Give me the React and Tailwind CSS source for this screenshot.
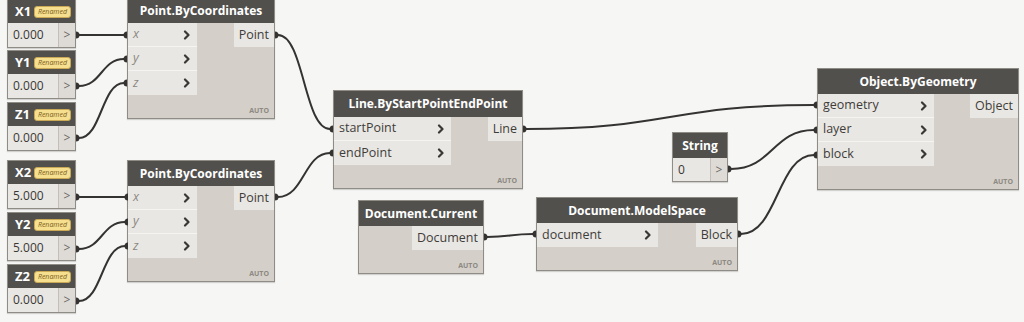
import React from "react";

const FONT = { fontFamily: '"Open Sans", "Noto Sans", sans-serif' };

function Chevron() {
  return (
    <svg width="8" height="10" viewBox="0 0 8 10" className="shrink-0">
      <path d="M2 1.5 L5.5 5 L2 8.5" fill="none" stroke="#3a3835" strokeWidth="2.2" strokeLinecap="round" strokeLinejoin="round" />
    </svg>
  );
}

function Badge() {
  return (
    <span className="ml-auto mr-[4px] flex h-[12px] items-center rounded-[3px] border border-[#c9a955] bg-[#f6df8f] px-[3px] text-[7px] italic leading-none text-[#7a5d1c]">
      Renamed
    </span>
  );
}

function NumberNode({ left, top, label, value }) {
  return (
    <div
      className="absolute flex w-[69px] flex-col border border-[#8f8b85] bg-[#d4d0c9] shadow-[0_1px_1px_rgba(0,0,0,0.15)]"
      style={{ left, top }}
    >
      <div className="flex h-[23px] items-center bg-[#52504d] pl-[7px]">
        <span className="text-[13px] font-bold leading-none text-white">{label}</span>
        <Badge />
      </div>
      <div className="flex h-[24px]">
        <div className="flex flex-1 items-center bg-[#e9e7e3] pl-[5px] text-[12px] text-[#3a3835]">{value}</div>
        <div className="flex w-[17px] items-center justify-center border-l border-[#c3bfb8] bg-[#dedbd6] text-[12px] text-[#6a6762]">&gt;</div>
      </div>
    </div>
  );
}

function StringNode({ left, top }) {
  return (
    <div
      className="absolute flex w-[56px] flex-col border border-[#8f8b85] bg-[#d4d0c9] shadow-[0_1px_1px_rgba(0,0,0,0.15)]"
      style={{ left, top }}
    >
      <div className="flex h-[25px] items-center justify-center bg-[#52504d]">
        <span className="text-[12px] font-bold leading-none text-white">String</span>
      </div>
      <div className="flex h-[23px]">
        <div className="flex flex-1 items-center bg-[#e9e7e3] pl-[5px] text-[12px] text-[#3a3835]">0</div>
        <div className="flex w-[17px] items-center justify-center border-l border-[#c3bfb8] bg-[#dedbd6] text-[12px] text-[#6a6762]">&gt;</div>
      </div>
    </div>
  );
}

function FuncNode({ left, top, width, title, inputs, inputWidth, output, italic, headerH = 25 }) {
  return (
    <div
      className="absolute flex flex-col border border-[#8f8b85] bg-[#d4d0c9] shadow-[0_1px_1px_rgba(0,0,0,0.15)]"
      style={{ left, top, width }}
    >
      <div className="flex items-center justify-center bg-[#52504d]" style={{ height: headerH }}>
        <span className="text-[12px] font-bold leading-none text-white">{title}</span>
      </div>
      <div className="flex">
        {inputs.length > 0 && (
          <div className="flex flex-col" style={{ width: inputWidth }}>
            {inputs.map((inp, i) => (
              <div
                key={inp}
                className={
                  "flex h-[24px] items-center justify-between bg-[#e9e7e3] pl-[5px] pr-[6px] " +
                  (i < inputs.length - 1 ? "border-b border-[#f5f4f2]" : "")
                }
              >
                <span
                  className={
                    italic
                      ? "text-[12.5px] italic leading-none text-[#8a8781]"
                      : "text-[12.5px] leading-none text-[#3f3d3a]"
                  }
                >
                  {inp}
                </span>
                <Chevron />
              </div>
            ))}
          </div>
        )}
        <div className="flex flex-1 justify-end">
          <div className="flex h-[24px] items-center bg-[#e9e7e3] px-[5px] text-[12.5px] leading-none text-[#3f3d3a]">
            {output}
          </div>
        </div>
      </div>
      <div className="flex h-[23px] items-end justify-end pb-[4px] pr-[5px]">
        <span className="text-[7px] font-bold leading-none text-[#8c8882]">AUTO</span>
      </div>
    </div>
  );
}

function wire(x1, y1, x2, y2) {
  const dx = Math.max(Math.abs(x2 - x1) * 0.5, 20);
  return `M${x1} ${y1} C${x1 + dx} ${y1}, ${x2 - dx} ${y2}, ${x2} ${y2}`;
}

const WIRES = [
  [76, 35, 127, 35],
  [76, 86, 127, 59],
  [76, 138, 127, 83],
  [275, 35, 333, 129],
  [76, 197, 128, 197],
  [76, 249, 128, 222],
  [76, 301, 128, 246],
  [275, 197, 333, 153],
  [523, 129, 817, 105],
  [728, 169, 817, 130],
  [484, 237, 536, 234],
  [738, 234, 817, 155],
];

export default function App() {
  return (
    <div className="relative h-[322px] w-[1024px] overflow-hidden bg-[#f6f6f5]" style={FONT}>
      <NumberNode left={7} top={-1} label="X1" value="0.000" />
      <NumberNode left={7} top={50} label="Y1" value="0.000" />
      <NumberNode left={7} top={102} label="Z1" value="0.000" />
      <NumberNode left={7} top={160} label="X2" value="5.000" />
      <NumberNode left={7} top={212} label="Y2" value="5.000" />
      <NumberNode left={7} top={264} label="Z2" value="0.000" />

      <FuncNode left={127} top={-3} width={148} title="Point.ByCoordinates" inputs={["x", "y", "z"]} inputWidth={69} output="Point" italic />
      <FuncNode left={127} top={160} width={148} title="Point.ByCoordinates" inputs={["x", "y", "z"]} inputWidth={69} output="Point" italic />
      <FuncNode left={333} top={90} width={190} title="Line.ByStartPointEndPoint" inputs={["startPoint", "endPoint"]} inputWidth={117} output="Line" headerH={26} />
      <FuncNode left={817} top={68} width={202} title="Object.ByGeometry" inputs={["geometry", "layer", "block"]} inputWidth={116} output="Object" />
      <FuncNode left={358} top={200} width={126} title="Document.Current" inputs={[]} inputWidth={0} output="Document" />
      <FuncNode left={536} top={197} width={202} title="Document.ModelSpace" inputs={["document"]} inputWidth={121} output="Block" />

      <StringNode left={672} top={132} />

      <svg className="pointer-events-none absolute left-0 top-0" width="1024" height="322">
        {WIRES.map(([x1, y1, x2, y2], i) => (
          <g key={i}>
            <path d={wire(x1 + 3, y1, x2 - 3, y2)} fill="none" stroke="#343331" strokeWidth="2" />
            <path d={`M${x1} ${y1 - 3.5} a3.5 3.5 0 0 1 0 7 z`} fill="#343331" />
            <path d={`M${x2} ${y2 - 3.5} a3.5 3.5 0 0 0 0 7 z`} fill="#343331" />
          </g>
        ))}
      </svg>
    </div>
  );
}
